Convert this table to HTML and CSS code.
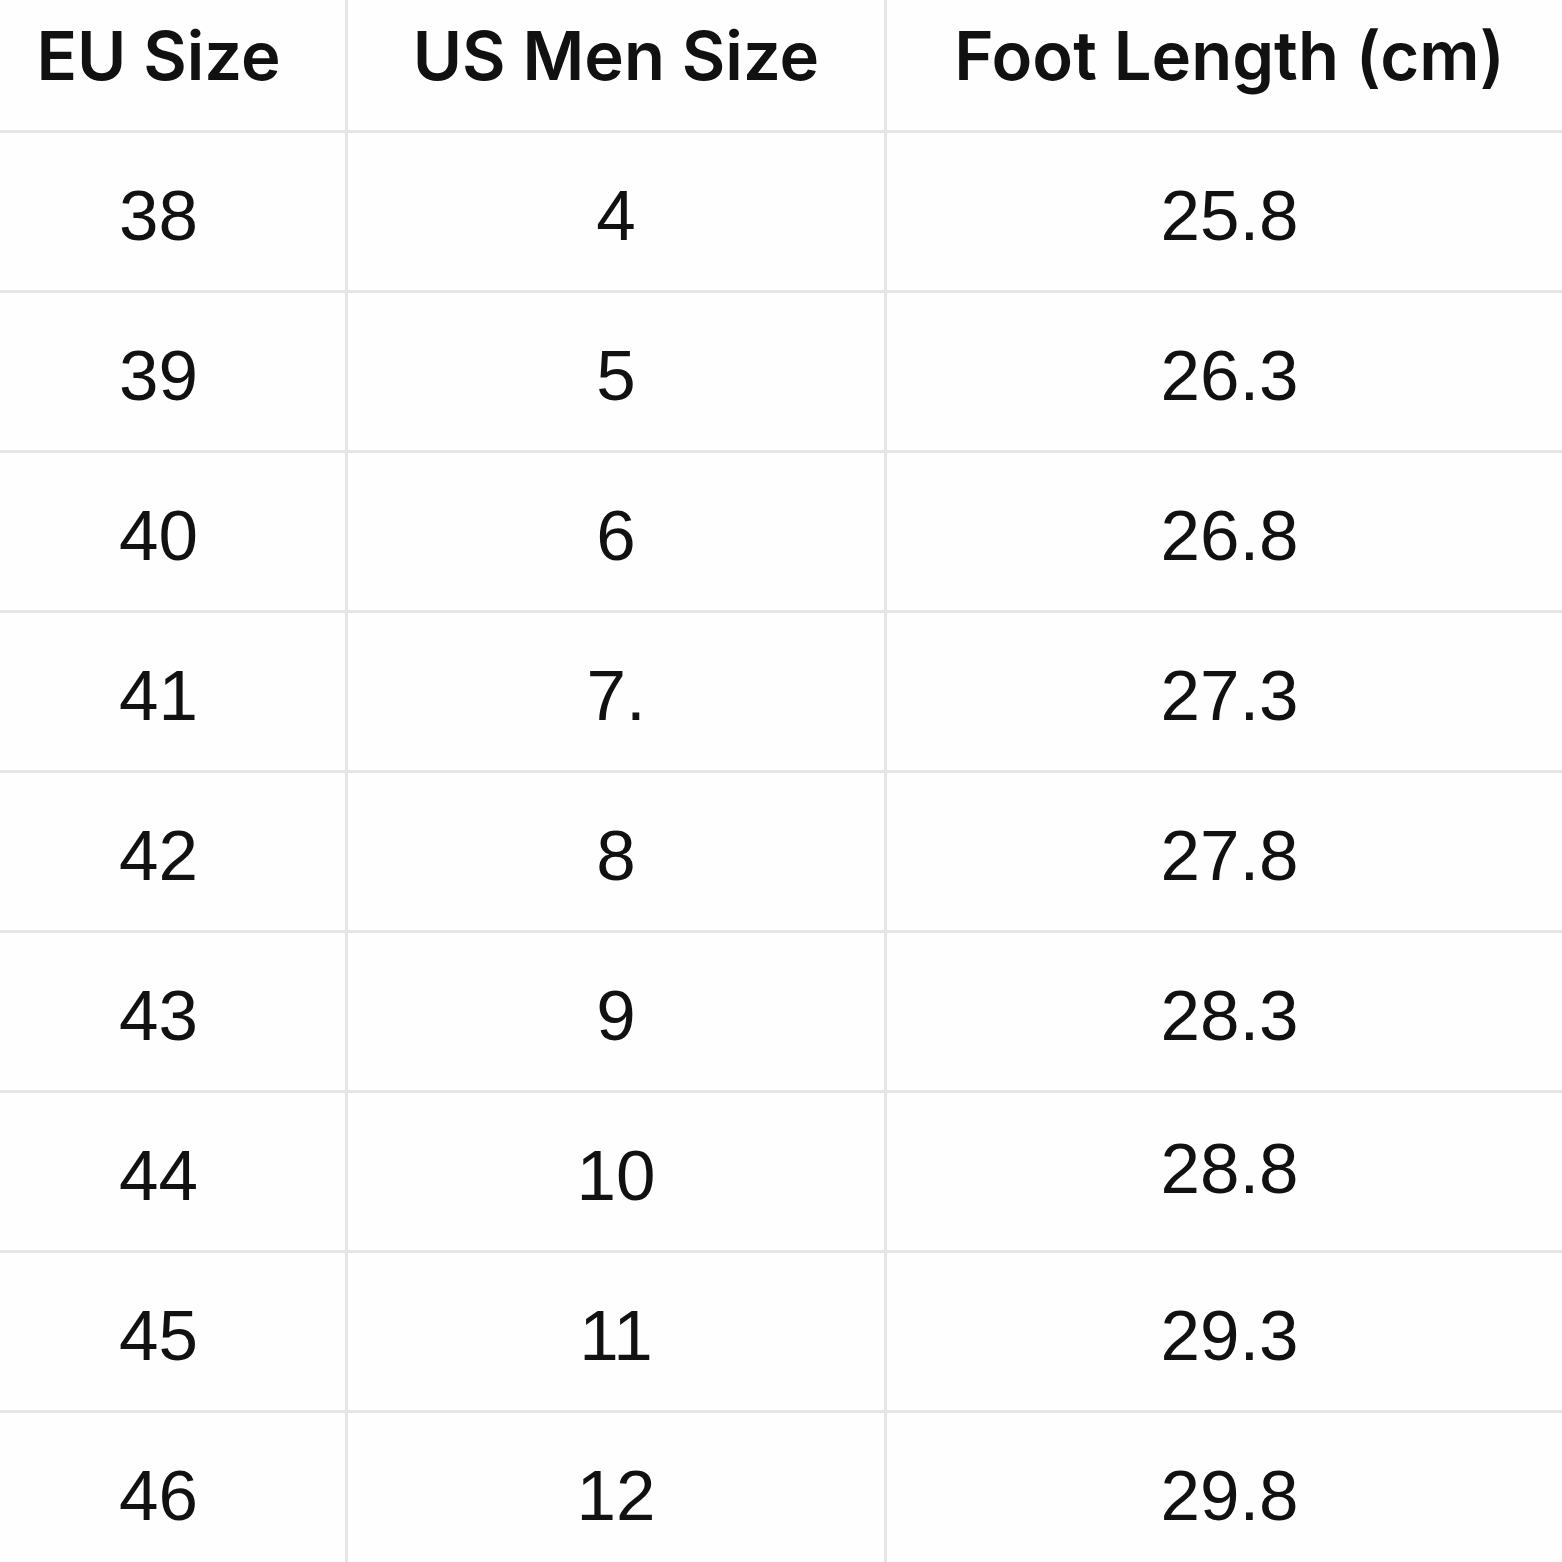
FILE: index.html
```html
<!DOCTYPE html>
<html lang="en">
<head>
<meta charset="utf-8">
<title>Size Chart</title>
<link rel="stylesheet" href="styles.css">
</head>
<body>
<div class="frame">
  <div class="chart">
    <div class="cell head c1">EU Size</div>
    <div class="cell head c2">US Men Size</div>
    <div class="cell head c3">Foot Length (cm)</div>

    <div class="cell c1">38</div><div class="cell c2">4</div><div class="cell c3">25.8</div>
    <div class="cell c1">39</div><div class="cell c2">5</div><div class="cell c3">26.3</div>
    <div class="cell c1">40</div><div class="cell c2">6</div><div class="cell c3">26.8</div>
    <div class="cell c1">41</div><div class="cell c2">7.</div><div class="cell c3">27.3</div>
    <div class="cell c1">42</div><div class="cell c2">8</div><div class="cell c3">27.8</div>
    <div class="cell c1">43</div><div class="cell c2">9</div><div class="cell c3">28.3</div>
    <div class="cell c1">44</div><div class="cell c2">10</div><div class="cell c3 raised">28.8</div>
    <div class="cell c1">45</div><div class="cell c2">11</div><div class="cell c3">29.3</div>
    <div class="cell c1 last">46</div><div class="cell c2 last">12</div><div class="cell c3 last">29.8</div>
  </div>
</div>
</body>
</html>
```

FILE: styles.css
```css
html, body {
  margin: 0;
  padding: 0;
  background: #ffffff;
  overflow: hidden;
}

.frame {
  width: 1562px;
  height: 1562px;
  overflow: hidden;
  background: #fefefe;
}

.chart {
  display: grid;
  grid-template-columns: 376px 539px 685px;
  grid-template-rows: 133px repeat(9, 160px);
  margin-left: -28px;
  width: 1600px;
  font-family: "Liberation Sans", Arial, sans-serif;
  color: #111111;
}

.cell {
  box-sizing: border-box;
  border-bottom: 3px solid #e6e6e6;
  text-align: center;
  font-size: 71px;
  line-height: 1;
  padding-top: 47px;
  white-space: nowrap;
}

.c1, .c2 {
  border-right: 3px solid #e6e6e6;
}

.head {
  font-family: Inter, "Liberation Sans", Arial, sans-serif;
  font-size: 67px;
  font-weight: 600;
  letter-spacing: 0;
  padding-top: 22px;
}

.raised {
  padding-top: 40px;
}

.last {
  border-bottom: none;
}
```
